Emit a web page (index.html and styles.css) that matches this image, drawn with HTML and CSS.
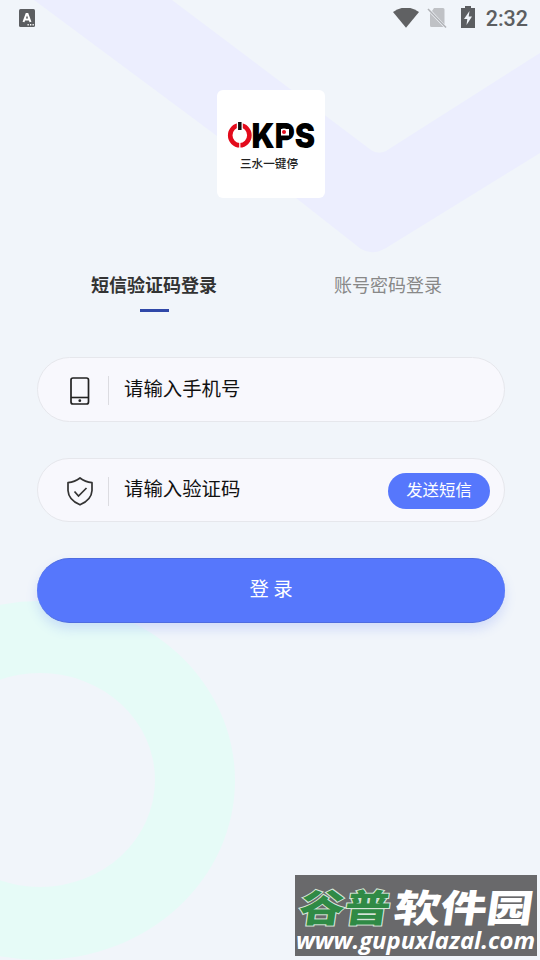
FILE: index.html
```
<!DOCTYPE html>
<html lang="zh-CN">
<head>
  <meta charset="UTF-8">
  <meta name="viewport" content="width=device-width, initial-scale=1.0">
  <title>登录</title>
  <link rel="stylesheet" href="styles.css">
</head>
<body>

<!-- Background shapes -->
<svg class="bg" viewBox="0 0 540 960">
  <path class="bg-chevron" d="M34 0H172L371 150Q378 155 386 151L540 53V153L386 248Q373 256 361 249L217 136Z"/>
  <path class="bg-ring" fill-rule="evenodd" d="M40 601A195 179.500 0 0 1 40 960A195 179.500 0 0 1 40 601ZM40 673A115 107 0 0 0 40 887A115 107 0 0 0 40 673Z"/>
</svg>

<!-- Status bar -->
<div class="status-bar">
  <svg class="keyboard-icon" width="16" height="18" viewBox="0 0 16 18">
    <rect width="16" height="18" rx="1.500" fill="#5c5e61"/>
    <path d="M4.500 13L7.500 5H8.500L11.500 13M5.700 10.500H10.300" fill="none" stroke="#fff" stroke-width="2"/>
    <path d="M8.500 15.800h1.300M11 15.800h1.300M13.500 15.800h1.300" stroke="#fff" stroke-width="1.400"/>
  </svg>
  <div class="status-right">
    <svg width="26" height="21" viewBox="0 0 26 21">
      <path d="M0 4Q13-5 26 4L13 19.800Z" fill="#606163"/>
    </svg>
    <svg class="sim-icon" width="20" height="21" viewBox="0 0 20 21">
      <path d="M7 0H16Q17.500 0 17.500 1.500V16.500L5 3ZM3 5L16.500 19H4.500Q3 19 3 17.500Z" fill="#bfc1c5"/>
      <path d="M1 1L19 19.500" stroke="#b0b2b6" stroke-width="1.500"/>
    </svg>
    <svg class="battery-icon" width="14" height="22" viewBox="0 0 14 22">
      <path d="M4 0H10V2H14V22H0V2H4Z" fill="#5c5e61"/>
      <path d="M8.500 5L3 13H6.300L5.500 19L11 10.500H7.700Z" fill="#f1f5fa"/>
    </svg>
    <span class="time">2:32</span>
  </div>
</div>

<div class="login">
  <div class="logo">
    <svg width="108" height="108" viewBox="0 0 108 108">
      <ellipse cx="22.800" cy="45.300" rx="9.600" ry="10" fill="none" stroke="#e30b1c" stroke-width="4.600"/>
      <path d="M22.800 52V59" stroke="#fff" stroke-width="1.200"/>
      <path d="M22.800 31V41" stroke="#fff" stroke-width="6"/>
      <path d="M22.800 32V40" stroke="#111" stroke-width="3.500"/>
      <text class="logo-name" x="34.500" y="57.500" textLength="63.500" lengthAdjust="spacingAndGlyphs">KPS</text>
      <rect x="64" y="39" width="8" height="6.500" fill="#fff"/>
      <circle cx="67" cy="42" r="2" fill="#e30b1c"/>
      <text class="logo-sub" x="23" y="77.500" textLength="58">三水一键停</text>
    </svg>
  </div>

  <div class="tabs">
    <div class="tab active">短信验证码登录</div>
    <div class="tab">账号密码登录</div>
  </div>

  <div class="field">
    <svg class="field-icon" width="28" height="30" viewBox="0 0 28 30">
      <rect x="5" y="2" width="17.500" height="26" rx="2" fill="none" stroke="#222" stroke-width="1.700"/>
      <path d="M5 21.500H22.500" stroke="#222" stroke-width="1.600"/>
      <circle cx="13.800" cy="24.700" r="1.400" fill="#222"/>
    </svg>
    <input type="text" placeholder="请输入手机号">
  </div>

  <div class="field code">
    <svg class="field-icon" width="28" height="30" viewBox="0 0 28 30">
      <path d="M14 2Q19 6 26 6.700V14.500Q25.500 24 14 28.800Q2.500 24 2 14.500V6.700Q9 6 14 2Z" fill="none" stroke="#333" stroke-width="1.700" stroke-linejoin="round"/>
      <path d="M8.500 15.500L12.500 20L20.500 12" fill="none" stroke="#333" stroke-width="1.700"/>
    </svg>
    <input type="text" placeholder="请输入验证码">
    <button class="send-button">发送短信</button>
  </div>

  <button class="login-button">登 录</button>
</div>

<!-- Site watermark -->
<div class="watermark">
  <svg width="242" height="81" viewBox="0 0 242 81">
    <text class="mark-name mark-green" x="9" y="47" textLength="91" lengthAdjust="spacingAndGlyphs" transform="skewX(-8)">谷普</text>
    <text class="mark-name" x="104" y="47" textLength="139" lengthAdjust="spacingAndGlyphs" transform="skewX(-8)">软件园</text>
    <text class="mark-url" x="1" y="74" textLength="239" lengthAdjust="spacingAndGlyphs">www.gupuxlazal.com</text>
  </svg>
</div>

</body>
</html>
```
FILE: styles.css
```
* {
  box-sizing: border-box;
}

body {
  margin: 0;
  height: 960px;
  overflow: hidden;
  position: relative;
  background-color: #f1f5fa;
  font-family: "Noto Sans CJK SC", sans-serif;
}

svg {
  display: block;
  flex-shrink: 0;
}

/* Background */
.bg {
  position: absolute;
  top: 0;
  left: 0;
  width: 540px;
  height: 960px;
  z-index: -1;
}

.bg-chevron {
  fill: #eceefe;
}

.bg-ring {
  fill: #e6fbf7;
}

/* Status bar */
.status-bar {
  height: 36px;
  padding: 0 12px 0 19px;
  display: flex;
  justify-content: space-between;
  align-items: center;
}

.status-right {
  display: flex;
  align-items: center;
}

.sim-icon {
  margin-left: 8px;
}

.battery-icon {
  margin-left: 14px;
  margin-top: -2px;
}

.time {
  margin-left: 11px;
  font-family: Roboto, sans-serif;
  font-size: 21.5px;
  font-weight: 500;
  line-height: 36px;
  padding-top: 2px;
  color: #5c5e61;
}

/* Login form */
.login {
  padding: 54px 35px 0 37px;
}

.logo {
  width: 108px;
  height: 108px;
  margin: 0 auto;
  background-color: white;
  border-radius: 6px;
}

.logo-name {
  font-family: Inter, sans-serif;
  font-size: 34px;
  font-weight: 900;
}

.logo-sub {
  font-size: 11.6px;
  font-weight: 500;
  fill: #222;
}

.tabs {
  display: flex;
  margin-top: 71px;
}

.tab {
  flex: 1;
  text-align: center;
  font-size: 18px;
  line-height: 30px;
  color: #888;
}

.tab.active {
  font-weight: bold;
  color: #333;
}

.tab.active::after {
  content: "";
  display: block;
  width: 29px;
  height: 3px;
  margin: 10px auto 0;
  background-color: #3048a8;
}

.field {
  height: 65px;
  margin-top: 45px;
  padding: 0 14px 0 28px;
  display: flex;
  align-items: center;
  background-color: #f8f8fd;
  border: 1px solid #e6e7ec;
  border-radius: 33px;
}

.field.code {
  height: 64px;
  margin-top: 36px;
}

.field-icon {
  margin-top: 2px;
}

.field input {
  flex: 1;
  min-width: 0;
  height: 29px;
  margin: 2px 0 0 14px;
  padding: 0 0 7px 15px;
  border: none;
  border-left: 1px solid #dcdce1;
  outline: none;
  background: none;
  font-family: inherit;
  font-size: 19.4px;
}

.field input::placeholder {
  color: #111;
}

.send-button {
  width: 102px;
  height: 36px;
  margin-top: 2px;
  padding: 0 0 5px;
  border: none;
  border-radius: 18px;
  background-color: #5677fc;
  color: white;
  font-family: inherit;
  font-size: 16.4px;
}

.login-button {
  display: block;
  width: 100%;
  height: 65px;
  margin-top: 36px;
  padding: 0 0 6px;
  border: 1px solid #4e6ce0;
  border-left: none;
  border-right: none;
  border-radius: 33px;
  background-color: #5677fc;
  box-shadow: 0 6px 12px rgba(86, 119, 252, 0.2);
  color: white;
  font-family: inherit;
  font-size: 19.4px;
}

/* Watermark */
.watermark {
  position: absolute;
  left: 295px;
  top: 875px;
  width: 242px;
  height: 81px;
  overflow: hidden;
  background-color: #69696b;
}

.mark-name {
  font-size: 38px;
  font-weight: 900;
  fill: white;
}

.mark-green {
  fill: #2f8a45;
  stroke: #d5e5d8;
  stroke-width: 2px;
  paint-order: stroke;
}

.mark-url {
  font-family: "Open Sans", sans-serif;
  font-size: 24px;
  font-weight: bold;
  font-style: italic;
  fill: white;
}
```
